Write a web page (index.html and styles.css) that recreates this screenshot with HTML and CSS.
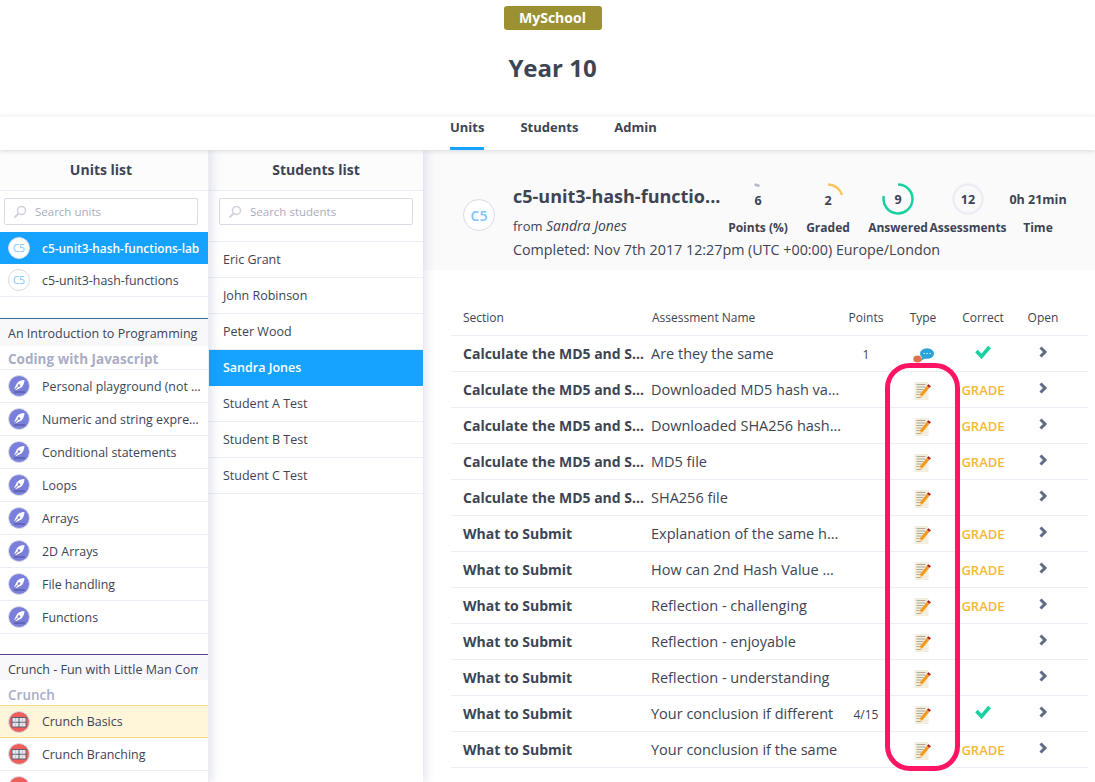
FILE: index.html
```html
<!DOCTYPE html>
<html lang="en">
<head>
  <meta charset="UTF-8" />
  <meta name="viewport" content="width=device-width, initial-scale=1.0" />
  <title>Year 10</title>
  <link rel="stylesheet" href="styles.css">
</head>
<body>
  <svg class="defs" width="0" height="0">
    <symbol id="pen" viewBox="0 0 22 22">
      <circle cx="11" cy="11" r="10.5" fill="#7b7fdc" stroke="#d9dbe8"/>
      <path d="M16.5 5c-3.500.2-6.600 1.400-8 4l-2.300 5 1.300 1.300 5-2.300c2.400-1.400 3.800-4.300 4-8z" fill="#fff"/>
      <circle cx="11" cy="10.500" r="1.300" fill="#7b7fdc"/>
      <path d="M6.500 15l3.500-3.500M6 17h11" stroke="#4a4d8c" stroke-width="1"/>
    </symbol>
    <symbol id="crunch" viewBox="0 0 22 22">
      <circle cx="11" cy="11" r="10.500" fill="#ee5f5b" stroke="#d9dbe8"/>
      <rect x="3.500" y="6" width="15" height="10.500" fill="#59606e"/>
      <path d="M4.500 7h6v3.800h-6zM11.500 7h6v3.800h-6zM4.500 11.800h6v3.800h-6zM11.500 11.800h6v3.800h-6z" fill="#e6e8ee"/>
      <path d="M7.500 7v8.600M14.500 7v8.600" stroke="#b5b9c4" stroke-width="0.700"/>
    </symbol>
    <symbol id="note" viewBox="0 0 18 18">
      <rect x="0.500" y="0" width="14" height="18" fill="#f3efdf"/>
      <path d="M2.500 2.500h9M2.500 5h9M2.500 7.500h7M2.500 10h5M2.500 12.500h3M2.500 15.500h5" stroke="#a89f8c" stroke-width="0.900"/>
      <path d="M6.500 15.800l-1-3 7.500-9 2.500 2-7.500 9z" fill="#f39a1f"/>
      <path d="M13 3.800l1.200-1.500 2.800 2-1.500 1.500z" fill="#a8181c"/>
      <path d="M5.500 12.800l1 3 2.500-1z" fill="#f7dcae"/>
    </symbol>
    <symbol id="chev" viewBox="0 0 10 12">
      <path d="M2.500 1.500L7 6 2.500 10.500" fill="none" stroke="#5f6b85" stroke-width="3"/>
    </symbol>
    <symbol id="tick" viewBox="0 0 16 14">
      <path d="M1.500 6L6.500 11.500 14.500 2" fill="none" stroke="#16d2a0" stroke-width="3.600"/>
    </symbol>
    <symbol id="lens" viewBox="0 0 14 14">
      <circle cx="8.500" cy="5.500" r="4" fill="none" stroke="#cfd2de" stroke-width="1.500"/>
      <path d="M5.500 8.500L1.500 12.500" stroke="#cfd2de" stroke-width="2"/>
    </symbol>
  </svg>

  <header class="top">
    <div class="badge">MySchool</div>
    <h1>Year 10</h1>
  </header>

  <nav class="tabs">
    <a class="tab active">Units</a>
    <a class="tab">Students</a>
    <a class="tab">Admin</a>
  </nav>

  <div class="main">
    <aside class="col units">
      <div class="col-head">Units list</div>
      <div class="search">
        <div class="search-box"><svg class="lens"><use href="#lens"/></svg>Search units</div>
      </div>
      <div class="unit selected"><span class="c5">C5</span>c5-unit3-hash-functions-lab</div>
      <div class="unit"><span class="c5">C5</span>c5-unit3-hash-functions</div>

      <div class="course blue"><span>An Introduction to Programming</span></div>
      <div class="course-sub">Coding with Javascript</div>
      <div class="unit"><svg class="ico"><use href="#pen"/></svg>Personal playground (not …</div>
      <div class="unit"><svg class="ico"><use href="#pen"/></svg>Numeric and string expre…</div>
      <div class="unit"><svg class="ico"><use href="#pen"/></svg>Conditional statements</div>
      <div class="unit"><svg class="ico"><use href="#pen"/></svg>Loops</div>
      <div class="unit"><svg class="ico"><use href="#pen"/></svg>Arrays</div>
      <div class="unit"><svg class="ico"><use href="#pen"/></svg>2D Arrays</div>
      <div class="unit"><svg class="ico"><use href="#pen"/></svg>File handling</div>
      <div class="unit"><svg class="ico"><use href="#pen"/></svg>Functions</div>

      <div class="course purple"><span>Crunch - Fun with Little Man Com</span></div>
      <div class="course-sub short">Crunch</div>
      <div class="unit current"><svg class="ico"><use href="#crunch"/></svg>Crunch Basics</div>
      <div class="unit"><svg class="ico"><use href="#crunch"/></svg>Crunch Branching</div>
      <div class="unit"><svg class="ico"><use href="#crunch"/></svg></div>
    </aside>

    <aside class="col students">
      <div class="col-head">Students list</div>
      <div class="search">
        <div class="search-box"><svg class="lens"><use href="#lens"/></svg>Search students</div>
      </div>
      <ul class="student-list">
        <li>Eric Grant</li>
        <li>John Robinson</li>
        <li>Peter Wood</li>
        <li class="selected">Sandra Jones</li>
        <li>Student A Test</li>
        <li>Student B Test</li>
        <li>Student C Test</li>
      </ul>
    </aside>

    <section class="detail">
      <div class="summary">
        <span class="c5 big">C5</span>
        <div class="info">
          <div class="info-top">
            <div class="names">
              <h2>c5-unit3-hash-functio...</h2>
              <div class="from">from <em>Sandra Jones</em></div>
            </div>
            <div class="stats">
              <div class="stat">
                <svg class="ring" viewBox="0 0 32 32"><path d="M12.500 1.500L17.500 3" fill="none" stroke="#b4b9cc" stroke-width="2.500"/><text x="16" y="22" text-anchor="middle">6</text></svg>
                <span>Points (%)</span>
              </div>
              <div class="stat">
                <svg class="ring" viewBox="0 0 32 32"><path d="M16 1.500A14.500 14.500 0 0 1 30 12" fill="none" stroke="#fcc45c" stroke-width="2.500"/><text x="16" y="22" text-anchor="middle">2</text></svg>
                <span>Graded</span>
              </div>
              <div class="stat">
                <svg class="ring" viewBox="0 0 32 32"><path d="M16 1.500A14.500 14.500 0 1 1 1.800 13" fill="none" stroke="#16d2a0" stroke-width="2.500"/><text x="16" y="21" text-anchor="middle">9</text></svg>
                <span>Answered</span>
              </div>
              <div class="stat">
                <svg class="ring" viewBox="0 0 32 32"><circle cx="16" cy="16" r="14.500" fill="none" stroke="#eceef4" stroke-width="2.500"/><text x="16" y="21" text-anchor="middle">12</text></svg>
                <span>Assessments</span>
              </div>
              <div class="stat">
                <div class="time">0h 21min</div>
                <span>Time</span>
              </div>
            </div>
          </div>
          <div class="completed">Completed: Nov 7th 2017 12:27pm (UTC +00:00) Europe/London</div>
        </div>
      </div>

      <table class="grid">
        <thead>
          <tr><th class="c-sec">Section</th><th class="c-name">Assessment Name</th><th class="c-mid">Points</th><th class="c-mid c-type">Type</th><th class="c-mid c-ok">Correct</th><th class="c-mid c-open">Open</th></tr>
        </thead>
        <tbody>
          <tr><td class="c-sec"><b>Calculate the MD5 and S…</b></td><td class="c-name">Are they the same</td><td class="c-mid">1</td><td class="c-mid">
            <svg class="bubble" viewBox="0 0 21 15"><path d="M10 8l-2.500 5 5.500-3z" fill="#2ba3d6"/><ellipse cx="4.500" cy="11" rx="4.200" ry="3.500" fill="#e0734a"/><ellipse cx="14" cy="5.500" rx="7" ry="5.300" fill="#2ba3d6"/><path d="M10.500 5.500h1.200M13.500 5.500h1.200M16.500 5.500h1.200" stroke="#fff" stroke-width="1.200"/></svg>
          </td><td class="c-mid"><svg class="tick"><use href="#tick"/></svg></td><td class="c-mid"><svg class="chev"><use href="#chev"/></svg></td></tr>
          <tr><td class="c-sec"><b>Calculate the MD5 and S…</b></td><td class="c-name">Downloaded MD5 hash va…</td><td class="c-mid"></td><td class="c-mid"><svg class="note"><use href="#note"/></svg></td><td class="c-mid grade">GRADE</td><td class="c-mid"><svg class="chev"><use href="#chev"/></svg></td></tr>
          <tr><td class="c-sec"><b>Calculate the MD5 and S…</b></td><td class="c-name">Downloaded SHA256 hash…</td><td class="c-mid"></td><td class="c-mid"><svg class="note"><use href="#note"/></svg></td><td class="c-mid grade">GRADE</td><td class="c-mid"><svg class="chev"><use href="#chev"/></svg></td></tr>
          <tr><td class="c-sec"><b>Calculate the MD5 and S…</b></td><td class="c-name">MD5 file</td><td class="c-mid"></td><td class="c-mid"><svg class="note"><use href="#note"/></svg></td><td class="c-mid grade">GRADE</td><td class="c-mid"><svg class="chev"><use href="#chev"/></svg></td></tr>
          <tr><td class="c-sec"><b>Calculate the MD5 and S…</b></td><td class="c-name">SHA256 file</td><td class="c-mid"></td><td class="c-mid"><svg class="note"><use href="#note"/></svg></td><td class="c-mid"></td><td class="c-mid"><svg class="chev"><use href="#chev"/></svg></td></tr>
          <tr><td class="c-sec"><b>What to Submit</b></td><td class="c-name">Explanation of the same h…</td><td class="c-mid"></td><td class="c-mid"><svg class="note"><use href="#note"/></svg></td><td class="c-mid grade">GRADE</td><td class="c-mid"><svg class="chev"><use href="#chev"/></svg></td></tr>
          <tr><td class="c-sec"><b>What to Submit</b></td><td class="c-name">How can 2nd Hash Value …</td><td class="c-mid"></td><td class="c-mid"><svg class="note"><use href="#note"/></svg></td><td class="c-mid grade">GRADE</td><td class="c-mid"><svg class="chev"><use href="#chev"/></svg></td></tr>
          <tr><td class="c-sec"><b>What to Submit</b></td><td class="c-name">Reflection - challenging</td><td class="c-mid"></td><td class="c-mid"><svg class="note"><use href="#note"/></svg></td><td class="c-mid grade">GRADE</td><td class="c-mid"><svg class="chev"><use href="#chev"/></svg></td></tr>
          <tr><td class="c-sec"><b>What to Submit</b></td><td class="c-name">Reflection - enjoyable</td><td class="c-mid"></td><td class="c-mid"><svg class="note"><use href="#note"/></svg></td><td class="c-mid"></td><td class="c-mid"><svg class="chev"><use href="#chev"/></svg></td></tr>
          <tr><td class="c-sec"><b>What to Submit</b></td><td class="c-name">Reflection - understanding</td><td class="c-mid"></td><td class="c-mid"><svg class="note"><use href="#note"/></svg></td><td class="c-mid"></td><td class="c-mid"><svg class="chev"><use href="#chev"/></svg></td></tr>
          <tr><td class="c-sec"><b>What to Submit</b></td><td class="c-name">Your conclusion if different</td><td class="c-mid">4/15</td><td class="c-mid"><svg class="note"><use href="#note"/></svg></td><td class="c-mid"><svg class="tick"><use href="#tick"/></svg></td><td class="c-mid"><svg class="chev"><use href="#chev"/></svg></td></tr>
          <tr><td class="c-sec"><b>What to Submit</b></td><td class="c-name">Your conclusion if the same</td><td class="c-mid"></td><td class="c-mid"><svg class="note"><use href="#note"/></svg></td><td class="c-mid grade">GRADE</td><td class="c-mid"><svg class="chev"><use href="#chev"/></svg></td></tr>
        </tbody>
      </table>
    </section>
  </div>

  <div class="callout"></div>
</body>
</html>
```

FILE: styles.css
```css
* {
  box-sizing: border-box;
}
html, body {
  margin: 0;
  height: 782px;
  overflow: hidden;
}
body {
  font-family: "Open Sans", sans-serif;
  color: #3d4454;
  background: white;
  position: relative;
}
.defs {
  position: absolute;
}

/* top */
.top {
  height: 116px;
  padding-top: 6px;
  display: flex;
  flex-direction: column;
  align-items: center;
}
.badge {
  width: 98px;
  height: 24px;
  margin-right: -10px;
  line-height: 24px;
  text-align: center;
  font-size: 14px;
  font-weight: 700;
  color: white;
  background: #9c9132;
  border-radius: 3px;
}
h1 {
  margin: 20px 0 0 10px;
  font-size: 24px;
  line-height: 36px;
  font-weight: 700;
}
.tabs {
  height: 34px;
  padding-left: 450px;
  display: flex;
  gap: 36px;
  border-top: 1px solid #f7f7f9;
  position: relative;
  z-index: 3;
  background: white;
  box-shadow: 0 1px 5px rgba(60, 65, 90, 0.18);
}
.tab {
  height: 33px;
  line-height: 21px;
  font-size: 13px;
  font-weight: 700;
}
.tab.active {
  border-bottom: 3px solid #15a3ff;
}

/* columns */
.main {
  display: flex;
  height: 632px;
}
.col {
  overflow: hidden;
  background: white;
  position: relative;
}
.units {
  width: 209px;
  z-index: 2;
  box-shadow: 2px 0 10px rgba(70, 80, 140, 0.18);
  border-right: 1px solid #eceef5;
}
.students {
  width: 214px;
  z-index: 1;
  box-shadow: 2px 0 10px rgba(70, 80, 140, 0.18);
}
.col-head {
  height: 41px;
  line-height: 39px;
  text-align: center;
  font-size: 14px;
  font-weight: 700;
  background: #fcfcfd;
  border-bottom: 1px solid #eceef5;
}
.units .col-head {
  padding-right: 6px;
}
.search {
  height: 41px;
  padding: 7px 10px 0 4px;
}
.students .search {
  padding: 7px 0 0 10px;
  height: 50px;
}
.students .search-box {
  width: 194px;
}
.search-box {
  height: 27px;
  display: flex;
  align-items: center;
  padding-left: 8px;
  font-size: 11.500px;
  color: #a9adbd;
  border: 1px solid #d9dbe8;
  border-radius: 2px;
  background: white;
}
.lens {
  width: 14px;
  height: 14px;
  margin-right: 8px;
}
.unit {
  height: 33px;
  padding-left: 8px;
  display: flex;
  align-items: center;
  font-size: 12.400px;
  border-bottom: 1px solid #eceef5;
  white-space: nowrap;
}
.unit.selected {
  height: 32px;
  background: #15a3ff;
  color: white;
  font-size: 11.900px;
  font-weight: 600;
  border-bottom: none;
}
.unit.current {
  background: #fff5d9;
  border-top: 1px solid #fbdc80;
  border-bottom: 1px solid #fbdc80;
}
.ico {
  width: 22px;
  height: 22px;
  margin-right: 12px;
  flex: none;
}
.c5 {
  width: 22px;
  height: 22px;
  margin-right: 12px;
  flex: none;
  display: flex;
  align-items: center;
  justify-content: center;
  font-size: 10px;
  font-weight: 400;
  color: #7cc4fb;
  background: white;
  border: 1px solid #d9dbe8;
  border-radius: 50%;
}
.course {
  background: #f8f8fa;
  font-size: 12.500px;
  white-space: nowrap;
}
.course span {
  display: block;
  width: 190px;
  margin-left: 8px;
  overflow: hidden;
}
.course.blue {
  margin-top: 21px;
  border-top: 1px solid #3b6a96;
  height: 28px;
  line-height: 29px;
}
.course.purple {
  margin-top: 20px;
  border-top: 1px solid #5e4091;
  height: 26px;
  line-height: 29px;
}
.course-sub {
  height: 24px;
  padding-left: 8px;
  line-height: 26px;
  font-size: 13.500px;
  font-weight: 700;
  color: #a9adc6;
  border-bottom: 1px solid #eceef5;
}
.course-sub.short {
  height: 25px;
  line-height: 31px;
  font-weight: 600;
  border-bottom: none;
}
.student-list {
  list-style: none;
  margin: 0;
  padding: 0;
  border-top: 1px solid #eceef5;
}
.student-list li {
  height: 36px;
  line-height: 35px;
  padding-left: 14px;
  font-size: 12.500px;
  border-bottom: 1px solid #eceef5;
}
.student-list li.selected {
  background: #15a3ff;
  color: white;
  font-weight: 600;
  border-bottom: none;
}

/* right side */
.detail {
  flex: 1;
  min-width: 0;
}
.summary {
  height: 120px;
  background: #fafafb;
  padding: 37px 0 0 40px;
  display: flex;
}
.c5.big {
  width: 32px;
  height: 32px;
  margin: 12px 18px 0 0;
  font-size: 14px;
  font-weight: 600;
}
.info {
  flex: 1;
  margin-top: -4px;
}
.info-top {
  display: flex;
  height: 56px;
}
.names {
  width: 210px;
}
h2 {
  margin: 0;
  font-size: 18px;
  line-height: 26px;
  font-weight: 700;
  white-space: nowrap;
}
.from {
  margin-top: 7px;
  font-size: 13px;
  line-height: 20px;
}
.from em {
  font-size: 14px;
}
.stats {
  display: flex;
}
.stat {
  width: 70px;
  display: flex;
  flex-direction: column;
  align-items: center;
  white-space: nowrap;
}
.stat span {
  font-size: 12px;
  font-weight: 700;
  margin-top: 4px;
  line-height: 18px;
}
.ring, .time {
  width: 32px;
  height: 32px;
  flex: none;
}
.ring text {
  font-size: 12.500px;
  font-weight: 700;
  fill: #3d4454;
}
.time {
  width: auto;
  font-size: 12.500px;
  font-weight: 700;
  line-height: 33px;
}
.completed {
  font-size: 14.300px;
  line-height: 20px;
  margin-top: 1px;
}
.grid {
  width: 637px;
  margin: 29px 0 0 28px;
  border-collapse: collapse;
  table-layout: fixed;
  font-size: 14px;
}
.grid th {
  height: 36px;
  padding-top: 2px;
  font-size: 12px;
  font-weight: 400;
  text-align: left;
  border-bottom: 1px solid #eceef5;
}
.grid td {
  height: 36px;
  padding: 2px 0 0;
  border-bottom: 1px solid #eceef5;
}
.grid .c-sec {
  width: 200px;
  padding-left: 12px;
  white-space: nowrap;
}
.grid td.c-sec, .grid td.c-name {
  padding-top: 0;
}
.grid .c-sec b {
  font-weight: 700;
}
.grid .c-name {
  width: 194px;
  white-space: nowrap;
  font-size: 14.500px;
}
.grid th.c-name {
  font-size: 12px;
}
.grid .c-mid {
  width: 42px;
  text-align: center;
  font-size: 12px;
}
.grid .c-type {
  width: 72px;
}
.grid .c-ok {
  width: 48px;
}
.grid .c-open {
  width: 81px;
}
.grid tr > :last-child {
  padding-right: 10px;
}
.grid .grade {
  font-size: 13px;
  font-weight: 600;
  color: #f5b932;
}
.note {
  width: 18px;
  height: 18px;
  margin-top: 2px;
  vertical-align: middle;
}
.bubble {
  width: 21px;
  height: 15px;
  vertical-align: middle;
}
.tick {
  width: 16px;
  height: 14px;
  margin-bottom: 4px;
  vertical-align: middle;
}
.chev {
  width: 10px;
  height: 12px;
  margin-bottom: 5px;
  vertical-align: middle;
}

/* hand drawn marker over the screenshot */
.callout {
  position: absolute;
  left: 885px;
  top: 363px;
  width: 75px;
  height: 408px;
  border: 5px solid #ff1464;
  border-radius: 25px;
  z-index: 5;
}
```
